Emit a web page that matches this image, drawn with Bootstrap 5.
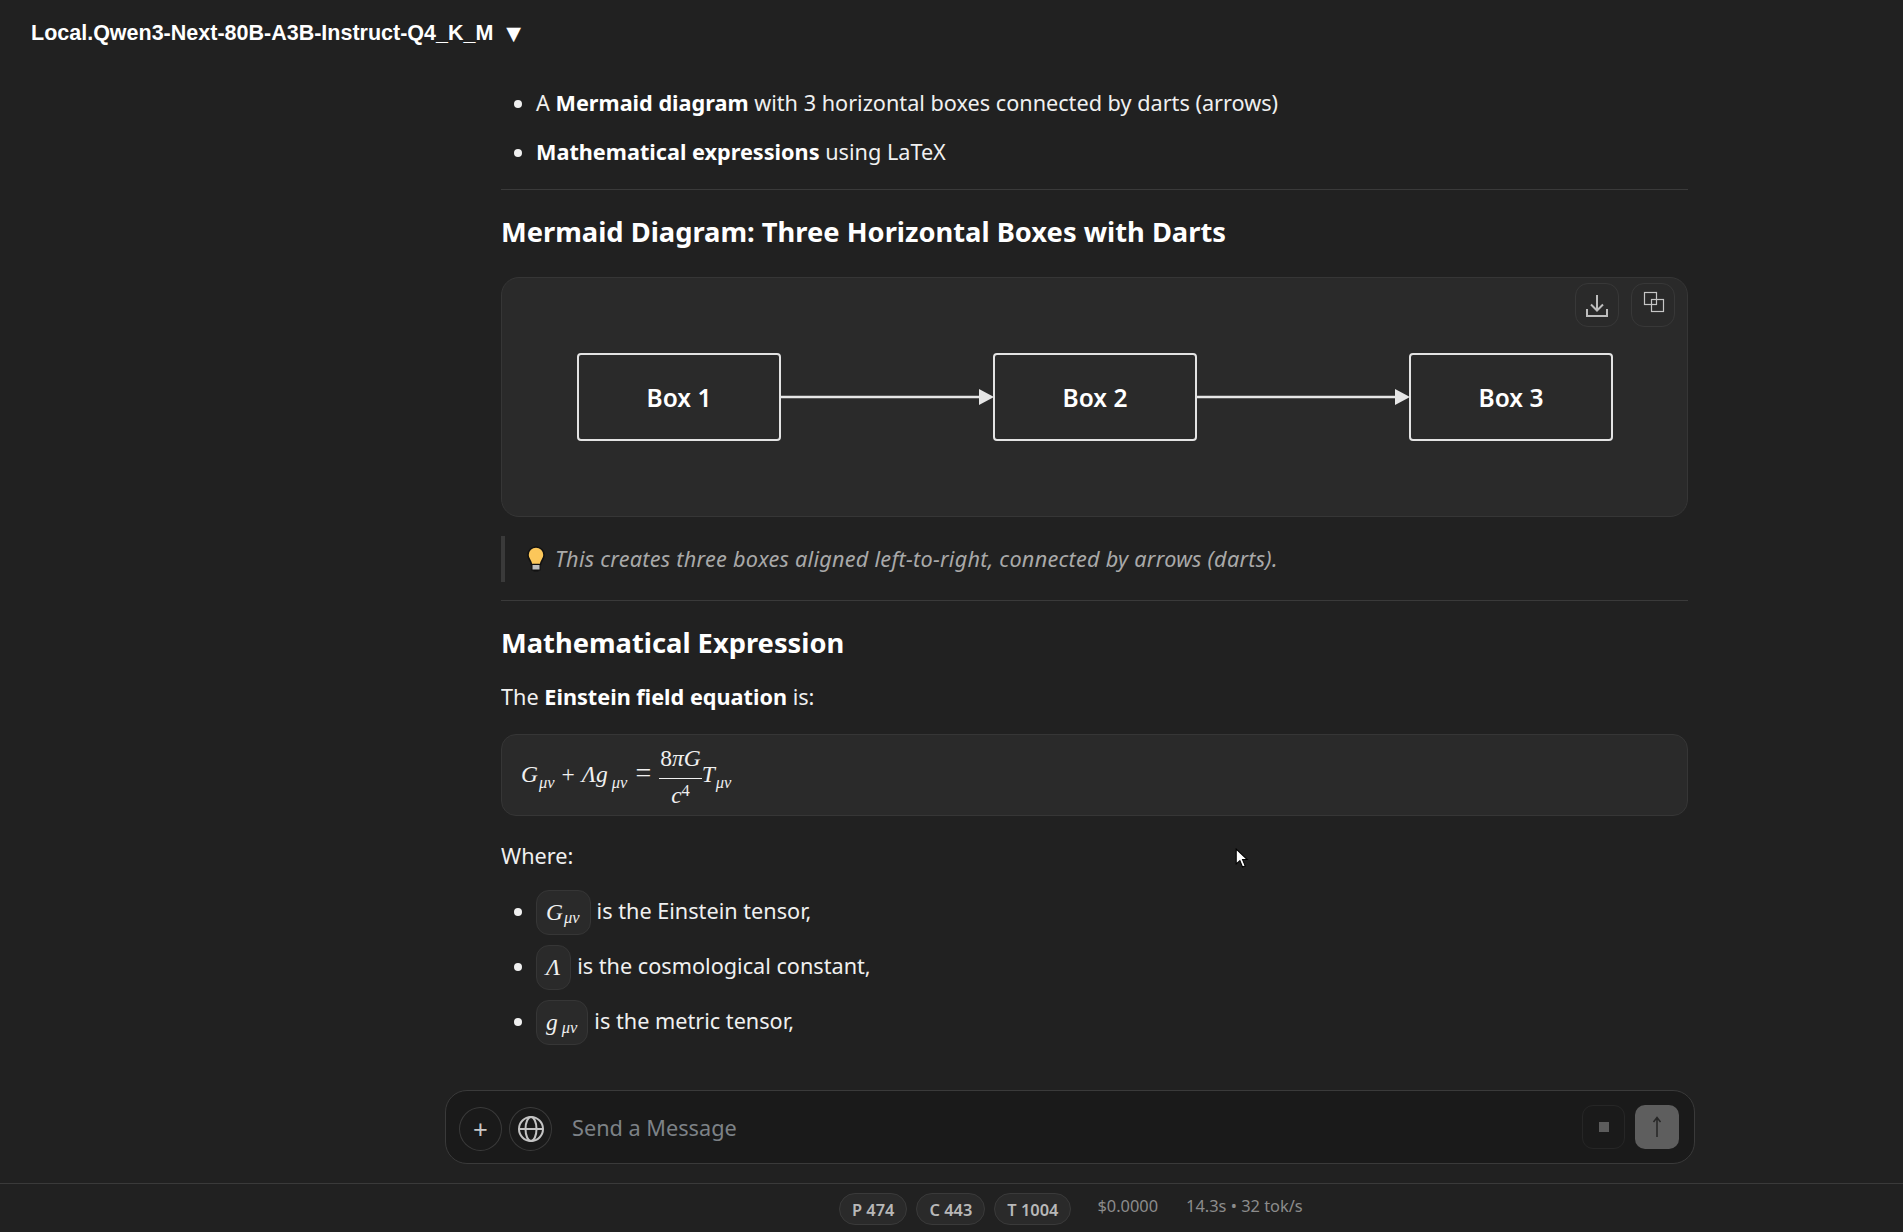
<!DOCTYPE html>
<html lang="en">
<head>
  <meta charset="UTF-8">
  <meta name="viewport" content="width=device-width, initial-scale=1">
  <title>Local.Qwen3-Next-80B-A3B-Instruct-Q4_K_M</title>
  <link href="https://cdn.jsdelivr.net/npm/bootstrap@5.3.0/dist/css/bootstrap.min.css" rel="stylesheet">
  <style>
    body { background: #212121; color: #f0f0f0; font-family: "Noto Sans", sans-serif; font-size: 21.66px; line-height: 34px; overflow: hidden; }
    .app-shell { height: 1232px; position: relative; }
    .top-bar { height: 64px; padding: 1px 0 0 31px; font-family: "Liberation Sans", sans-serif; font-weight: 700; font-size: 21.5px; color: #fff; flex: none; }
    .caret-mark { font-size: 25px; margin-left: 8px; }
    .chat-scroll { margin-left: 501px; width: 1187px; padding-top: 22px; overflow: hidden; }
    .chat-scroll strong { font-weight: 700; color: #fff; }
    .chat-list { margin: 0; padding-left: 35px; }
    .intro-item { margin-bottom: 15px; }
    .intro-item:last-child { margin-bottom: 0; }
    .sect-rule { border-top: 1px solid #3a3a3a; opacity: 1; margin: 0; }
    .rule-gap { margin-top: 20px; }
    .sect-head { font-size: 27.3px; font-weight: 700; color: #fff; line-height: 38px; margin: 23px 0 0; }
    .diagram-card { background: #2a2a2a; border: 1px solid #363636; border-radius: 18px; height: 240px; padding: 75px 75px 0 75px; margin: 26px 0 19px; position: relative; }
    .box-node { width: 204px; height: 88px; padding-top: 1px; border: 2.5px solid #e3e3e3; border-radius: 4px; font-size: 24.5px; font-weight: 600; color: #fff; flex: none; }
    .edge-line { flex: 1; height: 16px; margin-top: 36px; overflow: visible; }
    .card-tools { position: absolute; top: 5px; right: 12px; gap: 12px; }
    .tool-btn { width: 44px; height: 44px; border: 1px solid #383838; border-radius: 13px; background: transparent; padding: 0; }
    .tool-btn svg { display: block; }
    .tip-quote { border-left: 4px solid #3a3a3a; height: 46px; padding-left: 22px; margin: 0 0 18px; color: #a9a9a9; font-style: italic; letter-spacing: .25px; }
    .tip-bulb { flex: none; margin-right: 10px; }
    .plain-line { margin: 18px 0 0; }
    .math-card { background: #2a2a2a; border: 1px solid #363636; border-radius: 15px; height: 82px; padding: 4px 0 0 19px; margin-top: 20px; }
    .math-txt { font-family: "Liberation Serif", serif; font-style: italic; font-size: 23.5px; color: #f0f0f0; white-space: nowrap; line-height: 1; }
    .math-txt sub { font-size: 16.5px; bottom: -.32em; margin-left: 1px; }
    .math-txt .sub-far { margin-left: 4px; }
    .math-txt sup { font-size: 16.5px; top: -.42em; font-style: normal; }
    .math-up { font-style: normal; }
    .math-op { font-style: normal; margin: 0 7px; }
    .math-eq { font-style: normal; font-size: 28px; margin: 0 7px 0 8px; }
    .math-frac { display: inline-flex; flex-direction: column; align-items: center; vertical-align: middle; margin: 0 0 0 1px; }
    .frac-top { border-bottom: 1px solid #f0f0f0; padding: 0 1px 7px; }
    .frac-low { padding-top: 5px; }
    .where-line { margin: 23px 0 17px; }
    .where-item { height: 45px; line-height: 41px; margin-bottom: 10px; }
    .math-chip { display: inline-flex; align-items: center; height: 45px; padding: 1px 10px 0 9px; background: #2a2a2a; border: 1px solid #363636; border-radius: 13px; margin-right: 6px; vertical-align: top; }
    .prompt-bar { margin: 26px 0 19px 445px; width: 1250px; height: 74px; background: #1a1a1a; border: 1px solid #3a3a3a; border-radius: 22px; padding: 0 15px 0 13px; flex: none; }
    .round-btn { width: 43px; height: 44px; border-radius: 50%; border: 1px solid #3a3a3a; background: transparent; padding: 0; color: #c8c8c8; margin: 4px 7px 0 0; font-size: 26px; line-height: 1; }
    .prompt-hint { margin: 2px 0 0 13px; color: #7d8287; font-size: 21.7px; }
    .stop-btn { width: 43px; height: 44px; border: 1px solid #262626; border-radius: 11px; background: transparent; padding: 0; margin-right: 10px; }
    .stop-sq { width: 10px; height: 10px; background: #5c5c5c; }
    .send-btn { width: 44px; height: 44px; border: 0; border-radius: 10px; background: #5e5e5e; padding: 0; }
    .stat-bar { height: 49px; border-top: 1px solid #3a3a3a; padding: 9px 0 0 839px; font-size: 16.4px; flex: none; }
    .stat-pill { height: 32px; border: 1px solid #3a3a3a; border-radius: 16px; background: #2a2a2a; color: #b8b8b8; font-weight: 600; padding: 2px 12px 0; margin-right: 9px; line-height: 28px; }
    .stat-note { color: #8c8c8c; line-height: 26px; margin-left: 17px; margin-right: -9px; padding-right: 20px; }
    .mouse-mark { position: absolute; left: 1235px; top: 848px; }
  </style>
</head>
<body>
<div class="app-shell d-flex flex-column">
  <div class="top-bar d-flex align-items-center">
    <span>Local.Qwen3-Next-80B-A3B-Instruct-Q4_K_M</span><span class="caret-mark">▼</span>
  </div>

  <div class="chat-scroll flex-grow-1">
    <ul class="chat-list">
      <li class="intro-item">A <strong>Mermaid diagram</strong> with 3 horizontal boxes connected by darts (arrows)</li>
      <li class="intro-item"><strong>Mathematical expressions</strong> using LaTeX</li>
    </ul>
    <hr class="sect-rule rule-gap">

    <h3 class="sect-head">Mermaid Diagram: Three Horizontal Boxes with Darts</h3>

    <div class="diagram-card d-flex align-items-start">
      <div class="box-node d-flex align-items-center justify-content-center">Box 1</div>
      <svg class="edge-line" viewBox="0 0 212 16" preserveAspectRatio="none"><line x1="0" y1="8" x2="200" y2="8" stroke="#e6e6e6" stroke-width="2.5"/><polygon points="198,0 213,8 198,16" fill="#e6e6e6"/></svg>
      <div class="box-node d-flex align-items-center justify-content-center">Box 2</div>
      <svg class="edge-line" viewBox="0 0 212 16" preserveAspectRatio="none"><line x1="0" y1="8" x2="200" y2="8" stroke="#e6e6e6" stroke-width="2.5"/><polygon points="198,0 213,8 198,16" fill="#e6e6e6"/></svg>
      <div class="box-node d-flex align-items-center justify-content-center">Box 3</div>
      <div class="card-tools d-flex">
        <button class="tool-btn" type="button" aria-label="Download">
          <svg width="42" height="42" viewBox="0 0 42 42" fill="none" stroke="#bdbdbd" stroke-width="2"><path d="M21 11V26M15 20.5L21 26.5L27 20.5"/><path d="M11 25V32H31V25"/></svg>
        </button>
        <button class="tool-btn" type="button" aria-label="Copy">
          <svg width="42" height="42" viewBox="0 0 42 42" fill="none" stroke="#c6c6c6" stroke-width="1.2"><rect x="12.5" y="8.5" width="12" height="12"/><rect x="19.5" y="15.5" width="12" height="12"/></svg>
        </button>
      </div>
    </div>

    <blockquote class="tip-quote d-flex align-items-center">
      <svg class="tip-bulb" width="18" height="26" viewBox="0 0 18 26"><path d="M9 1a8 8 0 0 0-8 8c0 4 3 5.500 3.500 9.500h9C14 14.500 17 13 17 9a8 8 0 0 0-8-8z" fill="#fcc75a" stroke="#111" stroke-width="1.500"/><rect x="5" y="18.500" width="8" height="5.500" fill="#bdbdbd" stroke="#111"/><rect x="6.500" y="24" width="5" height="1.500" fill="#111"/></svg>
      <span>This creates three boxes aligned left-to-right, connected by arrows (darts).</span>
    </blockquote>
    <hr class="sect-rule">

    <h3 class="sect-head">Mathematical Expression</h3>
    <p class="plain-line">The <strong>Einstein field equation</strong> is:</p>

    <div class="math-card d-flex align-items-center">
      <span class="math-txt">G<sub>μν</sub><span class="math-op">+</span>Λg<sub class="sub-far">μν</sub><span class="math-eq">=</span><span class="math-frac"><span class="frac-top"><span class="math-up">8</span>πG</span><span class="frac-low">c<sup>4</sup></span></span>T<sub>μν</sub></span>
    </div>

    <p class="where-line">Where:</p>
    <ul class="chat-list">
      <li class="where-item"><span class="math-chip math-txt">G<sub>μν</sub></span>is the Einstein tensor,</li>
      <li class="where-item"><span class="math-chip math-txt">Λ</span>is the cosmological constant,</li>
      <li class="where-item"><span class="math-chip math-txt">g<sub class="sub-far">μν</sub></span>is the metric tensor,</li>
    </ul>
  </div>

  <div class="prompt-bar d-flex align-items-center">
    <button class="round-btn" type="button">+</button>
    <button class="round-btn" type="button" aria-label="Web search">
      <svg class="d-block mx-auto" width="28" height="28" viewBox="0 0 28 28" fill="none" stroke="#c4c4c4" stroke-width="2"><circle cx="14" cy="14" r="12"/><ellipse cx="14" cy="14" rx="5.500" ry="12"/><line x1="2" y1="14" x2="26" y2="14"/></svg>
    </button>
    <span class="prompt-hint flex-grow-1">Send a Message</span>
    <button class="stop-btn d-flex align-items-center justify-content-center" type="button" aria-label="Stop"><span class="stop-sq"></span></button>
    <button class="send-btn d-flex align-items-center justify-content-center" type="button" aria-label="Send">
      <svg width="14" height="22" viewBox="0 0 14 22" fill="none" stroke="#262626" stroke-width="1.500"><path d="M7 21V2M3.500 6L7 1.500L10.500 6"/></svg>
    </button>
  </div>

  <div class="stat-bar d-flex align-items-start">
    <span class="stat-pill">P 474</span>
    <span class="stat-pill">C 443</span>
    <span class="stat-pill">T 1004</span>
    <span class="stat-note">$0.0000</span>
    <span class="stat-note">14.3s • 32 tok/s</span>
  </div>

  <svg class="mouse-mark" width="14" height="20" viewBox="0 0 13 19"><path d="M1 1V15L4.500 12L7 18L9.500 17L7 11H11.500Z" fill="#fff" stroke="#000"/></svg>
</div>
<script src="https://cdn.jsdelivr.net/npm/bootstrap@5.3.0/dist/js/bootstrap.bundle.min.js"></script>
</body>
</html>
